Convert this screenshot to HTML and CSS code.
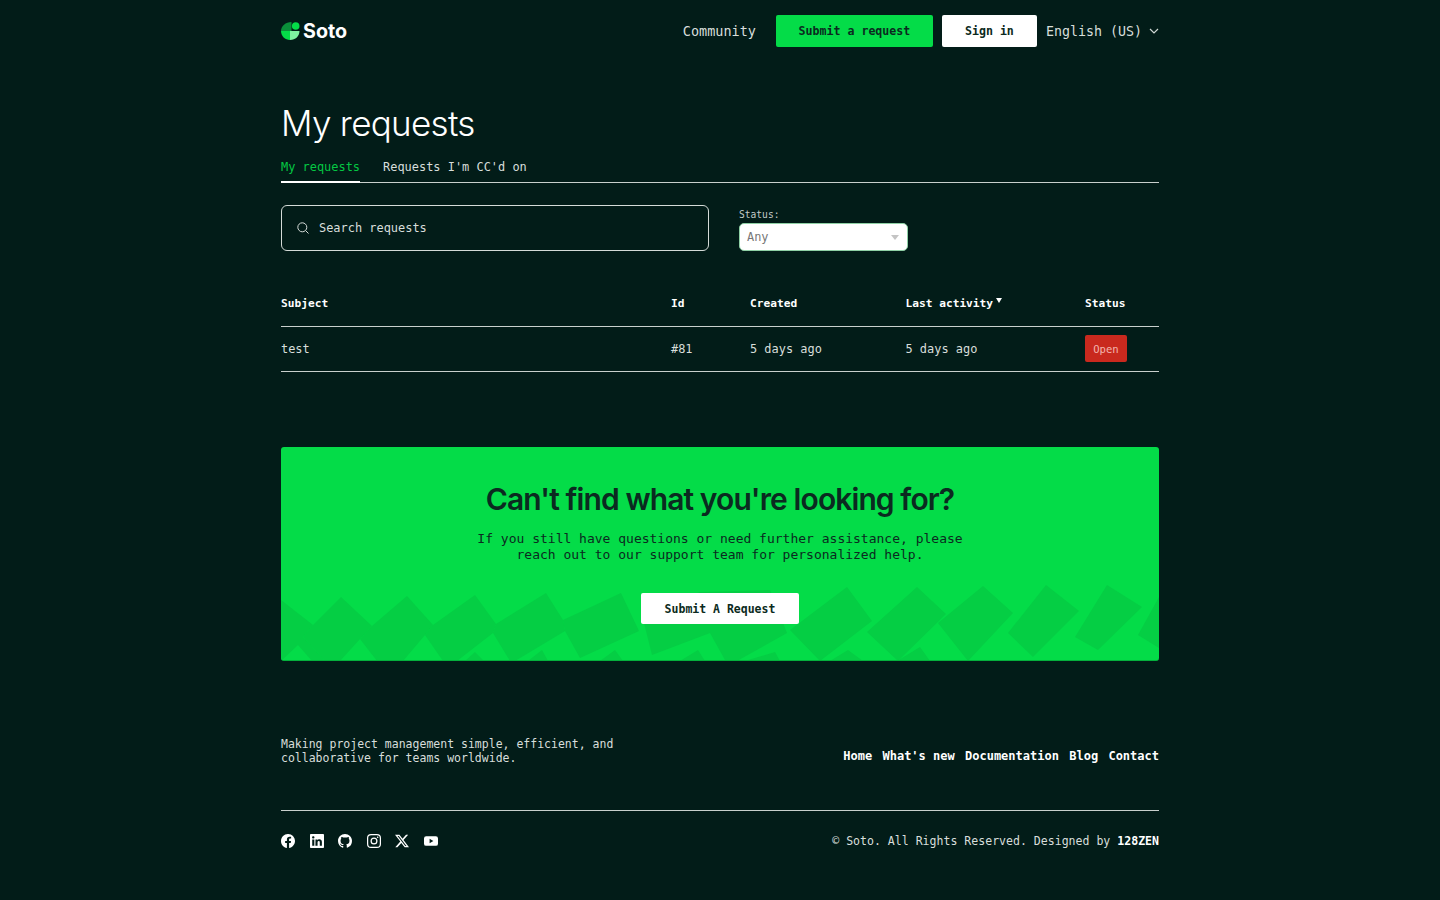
FILE: index.html
```html
<!DOCTYPE html>
<html lang="en">
<head>
    <meta charset="UTF-8">
    <meta name="viewport" content="width=device-width, initial-scale=1.0">
    <title>My requests - Soto</title>
    <link rel="stylesheet" href="styles.css">
</head>
<body>

<div class="container">
    <header class="header">
        <a class="logo" href="#">
            <svg class="logo-mark" width="19" height="18" viewBox="0 0 19 18">
                <path d="M0 9C0 4 4.500 0 10.500 0V9z" fill="#0a8f3a"/>
                <path d="M0 9h9v9C4 18 0 14 0 9z" fill="#04dc48"/>
                <path d="M9 9h9.500C18.500 14 14.500 18 9 18z" fill="#7df0a0"/>
                <circle cx="14.700" cy="4" r="3.800" fill="#04dc48"/>
            </svg>
            <span>Soto</span>
        </a>
        <nav class="nav">
            <a class="nav-link" href="#">Community</a>
            <a class="btn btn-green" href="#">Submit a request</a>
            <a class="btn btn-white" href="#">Sign in</a>
            <a class="lang" href="#">English (US)
                <svg width="10" height="6" viewBox="0 0 10 6"><path d="M1 1l4 4 4-4" fill="none" stroke="#cfd6d3" stroke-width="1.200"/></svg>
            </a>
        </nav>
    </header>

    <h1>My requests</h1>

    <!-- Tabs -->
    <div class="tabs">
        <a class="tab active" href="#">My requests</a>
        <a class="tab" href="#">Requests I'm CC'd on</a>
    </div>

    <!-- Search and filter -->
    <div class="filters">
        <div class="search">
            <svg width="12" height="12" viewBox="0 0 12 12"><circle cx="5.300" cy="5.300" r="4.500" fill="none" stroke="#d5dbd8" stroke-width="1"/><path d="M8.600 8.600L11.500 11.500" stroke="#d5dbd8" stroke-width="1"/></svg>
            <span>Search requests</span>
        </div>
        <div class="status-filter">
            <label>Status:</label>
            <div class="select">
                <span>Any</span>
                <i class="select-arrow"></i>
            </div>
        </div>
    </div>

    <!-- Result table -->
    <table class="request-table">
        <thead>
            <tr>
                <th class="col-subject">Subject</th>
                <th class="col-id">Id</th>
                <th class="col-created">Created</th>
                <th class="col-activity">Last activity<i class="sort-arrow"></i></th>
                <th>Status</th>
            </tr>
        </thead>
        <tbody>
            <tr>
                <td>test</td>
                <td>#81</td>
                <td>5 days ago</td>
                <td>5 days ago</td>
                <td><span class="badge">Open</span></td>
            </tr>
        </tbody>
    </table>

    <!-- Call to action -->
    <section class="cta">
        <svg class="cta-pattern" viewBox="281 447 878 214" width="878" height="214">
            <g fill="#05ce44">
                <polygon points="281,600 313,625 303,637 325,661 312,661 298,645 281,661"/>
                <polygon points="341,597 372,626 360,639 340,661 325,661 303,637 313,625"/>
                <polygon points="407,596 433,625 425,635 403,661 377,661 360,639 372,626"/>
                <polygon points="475,595 496,624 493,633 457,661 443,661 425,635 433,625"/>
                <polygon points="546,593 563,620 565,631 515,661 510,661 493,633 496,624"/>
                <polygon points="621,593 639,631 580,658 565,631 563,620"/>
                <polygon points="642,615 652,655 710,633 725,660 737,661 787,633 770,590 700,592"/>
                <polygon points="847,587 872,621 820,661 790,630"/>
                <polygon points="917,587 946,614 898,661 867,632"/>
                <polygon points="983,586 1013,613 968,661 938,623"/>
                <polygon points="1046,585 1079,611 1033,657 1008,633"/>
                <polygon points="1107,585 1142,607 1098,650 1075,637"/>
                <polygon points="1159,597 1138,635 1159,648"/>
                <polygon points="475,652 484,661 465,661"/>
                <polygon points="542,650 548,661 528,661"/>
                <polygon points="615,650 623,661 600,661"/>
                <polygon points="698,650 705,661 680,661"/>
                <polygon points="775,652 780,661 745,661"/>
                <polygon points="848,650 863,661 830,661"/>
                <polygon points="920,647 930,661 897,661"/>
            </g>
        </svg>
        <h2>Can't find what you're looking for?</h2>
        <p>If you still have questions or need further assistance, please<br>reach out to our support team for personalized help.</p>
        <a class="btn-cta" href="#">Submit A Request</a>
    </section>

    <footer class="footer">
        <div class="footer-top">
            <p>Making project management simple, efficient, and<br>collaborative for teams worldwide.</p>
            <nav class="footer-links">
                <a href="#">Home</a>
                <a href="#">What's new</a>
                <a href="#">Documentation</a>
                <a href="#">Blog</a>
                <a href="#">Contact</a>
            </nav>
        </div>
        <div class="footer-bottom">
            <div class="social">
                <svg width="14" height="14" viewBox="0 0 16 16"><path d="M16 8.049c0-4.446-3.582-8.050-8-8.050C3.580 0-.002 3.603-.002 8.050c0 4.017 2.926 7.347 6.750 7.951v-5.625h-2.030V8.050H6.750V6.275c0-2.017 1.195-3.131 3.022-3.131.876 0 1.791.157 1.791.157v1.980h-1.009c-.993 0-1.303.621-1.303 1.258v1.510h2.218l-.354 2.326H9.250V16c3.824-.604 6.750-3.934 6.750-7.951"/></svg>
                <svg width="14" height="14" viewBox="0 0 16 16"><path d="M0 1.146C0 .513.526 0 1.175 0h13.650C15.474 0 16 .513 16 1.146v13.708c0 .633-.526 1.146-1.175 1.146H1.175C.526 16 0 15.487 0 14.854zm4.943 12.248V6.169H2.542v7.225zm-1.200-8.212c.837 0 1.358-.554 1.358-1.248-.015-.709-.520-1.248-1.342-1.248S2.400 3.226 2.400 3.934c0 .694.521 1.248 1.327 1.248zm4.908 8.212V9.359c0-.216.016-.432.080-.586.173-.431.568-.878 1.232-.878.869 0 1.216.662 1.216 1.634v3.865h2.401V9.250c0-2.220-1.184-3.252-2.764-3.252-1.274 0-1.845.700-2.165 1.193v.025h-.016l.016-.025V6.169h-2.400c.030.678 0 7.225 0 7.225z"/></svg>
                <svg width="14" height="14" viewBox="0 0 16 16"><path d="M8 0C3.580 0 0 3.580 0 8c0 3.540 2.290 6.530 5.470 7.590.400.070.550-.170.550-.380 0-.190-.010-.820-.010-1.490-2.010.370-2.530-.490-2.690-.940-.090-.230-.480-.940-.820-1.130-.280-.150-.680-.520-.010-.530.630-.010 1.080.580 1.230.820.720 1.210 1.870.870 2.330.660.070-.520.280-.870.510-1.070-1.780-.200-3.640-.890-3.640-3.950 0-.870.310-1.590.820-2.150-.080-.200-.360-1.020.080-2.120 0 0 .670-.210 2.200.820.640-.180 1.320-.270 2-.270s1.360.090 2 .270c1.530-1.040 2.200-.820 2.200-.820.440 1.100.160 1.920.080 2.120.510.560.820 1.270.820 2.150 0 3.070-1.870 3.750-3.650 3.950.290.250.540.730.540 1.480 0 1.070-.010 1.930-.010 2.200 0 .210.150.460.550.380A8.010 8.010 0 0 0 16 8c0-4.420-3.580-8-8-8"/></svg>
                <svg width="14" height="14" viewBox="0 0 16 16"><rect x=".7" y=".7" width="14.600" height="14.600" rx="4" fill="none" stroke="#fff" stroke-width="1.400"/><circle cx="8" cy="8" r="3.300" fill="none" stroke="#fff" stroke-width="1.400"/><circle cx="12.200" cy="3.800" r=".9"/></svg>
                <svg width="14" height="14" viewBox="0 0 16 16"><path d="M12.600.750h2.454l-5.360 6.142L16 15.250h-4.937l-3.867-5.070-4.425 5.070H.316l5.733-6.570L0 .750h5.063l3.495 4.633L12.601.750Zm-.860 13.028h1.360L4.323 2.145H2.865z"/></svg>
                <svg width="14" height="14" viewBox="0 0 16 16"><path fill-rule="evenodd" d="M2.500 2.500h11A2.500 2.500 0 0 1 16 5v6a2.500 2.500 0 0 1-2.500 2.500h-11A2.500 2.500 0 0 1 0 11V5a2.500 2.500 0 0 1 2.500-2.500zM6.400 5.500v5L10.700 8z"/></svg>
            </div>
            <p class="copyright">© Soto. All Rights Reserved. Designed by <b>128ZEN</b></p>
        </div>
    </footer>
</div>

</body>
</html>
```

FILE: styles.css
```css
* {
    box-sizing: border-box;
    margin: 0;
    padding: 0;
}

body {
    font-family: 'DejaVu Sans Mono', 'Liberation Mono', monospace;
    background-color: #021c18;
    color: #d8dedb;
    font-size: 11.95px;
}

a {
    color: inherit;
    text-decoration: none;
}

.container {
    width: 878px;
    margin: 0 auto;
}

.header {
    height: 62px;
    display: flex;
    align-items: center;
    justify-content: space-between;
}

.logo {
    display: flex;
    align-items: center;
    gap: 3px;
    font-family: 'Inter', sans-serif;
    font-size: 19.7px;
    font-weight: 700;
    color: #fff;
}

.nav {
    display: flex;
    align-items: center;
}

.nav-link {
    font-size: 13.5px;
    margin-right: 20px;
}

.btn {
    display: flex;
    align-items: center;
    justify-content: center;
    height: 32px;
    border-radius: 2px;
    font-size: 11.6px;
    font-weight: 700;
    color: #0b2a20;
}

.btn-green {
    width: 157px;
    background-color: #04dc48;
    margin-right: 9px;
}

.btn-white {
    width: 95px;
    background-color: #fff;
    margin-right: 9px;
}

.lang {
    display: flex;
    align-items: center;
    gap: 7px;
    font-size: 13.3px;
}

h1 {
    margin-top: 38px;
    font-family: 'Inter', sans-serif;
    font-size: 35px;
    font-weight: 300;
    line-height: 46px;
    letter-spacing: -0.7px;
    color: #fff;
}

.tabs {
    display: flex;
    gap: 23px;
    border-bottom: 1px solid #c9d0cd;
}

.tab {
    padding: 13px 0 6px;
    line-height: 16px;
    margin-bottom: -1px;
    border-bottom: 2px solid transparent;
}

.tab.active {
    color: #04c843;
    border-bottom-color: #fff;
}

.filters {
    display: flex;
    align-items: flex-end;
    gap: 30px;
    margin-top: 22px;
}

.search {
    width: 428px;
    height: 46px;
    display: flex;
    align-items: center;
    gap: 10px;
    padding-left: 15px;
    border: 1px solid #d5dbd8;
    border-radius: 6px;
}

.status-filter label {
    display: block;
    font-size: 9.6px;
    line-height: 12px;
    margin-bottom: 2px;
    color: #c3cbc8;
}

.select {
    width: 169px;
    height: 28px;
    display: flex;
    align-items: center;
    justify-content: space-between;
    padding: 0 8px 0 7px;
    background-color: #fff;
    border: 1px solid #8fd0a5;
    border-radius: 5px;
    color: #777;
}

.select-arrow {
    width: 0;
    height: 0;
    border-left: 4px solid transparent;
    border-right: 4px solid transparent;
    border-top: 5px solid #c4c4c4;
}

.request-table {
    width: 100%;
    margin-top: 30px;
    border-collapse: separate;
    border-spacing: 0;
    table-layout: fixed;
}

.request-table th,
.request-table td {
    text-align: left;
    border-bottom: 1px solid #c9d0cd;
    vertical-align: middle;
}

.request-table th {
    height: 46px;
    font-size: 11.2px;
    color: #fff;
}

.request-table td {
    height: 45px;
}

.col-subject { width: 390px; }
.col-id { width: 79px; }
.col-created { width: 155.5px; }
.col-activity { width: 179.5px; }

.sort-arrow {
    display: inline-block;
    margin-left: 3px;
    vertical-align: 4px;
    border-left: 3px solid transparent;
    border-right: 3px solid transparent;
    border-top: 5px solid #fff;
}

.badge {
    display: flex;
    align-items: center;
    justify-content: center;
    width: 42px;
    height: 27px;
    margin-bottom: 1px;
    background-color: #c9291e;
    border-radius: 2px;
    color: #f3b5ae;
    font-size: 10.6px;
}

.cta {
    position: relative;
    height: 214px;
    margin-top: 75px;
    padding-top: 34px;
    background-color: #04dc48;
    border-bottom: 1px solid #04b03c;
    border-radius: 3px;
    overflow: hidden;
    text-align: center;
    color: #0b2a20;
}

.cta-pattern {
    position: absolute;
    left: 0;
    top: 0;
}

.cta h2,
.cta p,
.btn-cta {
    position: relative;
}

.cta h2 {
    font-family: 'Inter', sans-serif;
    font-size: 30px;
    font-weight: 600;
    line-height: 36px;
    letter-spacing: -0.9px;
}

.cta p {
    margin-top: 14px;
    font-size: 13px;
    line-height: 16px;
}

.btn-cta {
    display: flex;
    align-items: center;
    justify-content: center;
    width: 158px;
    height: 31px;
    margin: 30px auto 0;
    background-color: #fff;
    border-radius: 2px;
    font-size: 11.5px;
    font-weight: 700;
}

.footer {
    margin-top: 76px;
}

.footer-top {
    display: flex;
    justify-content: space-between;
    align-items: flex-end;
    padding-bottom: 45px;
    border-bottom: 1px solid #c9d0cd;
}

.footer-top p {
    font-size: 11.5px;
    line-height: 14px;
}

.footer-links {
    display: flex;
    gap: 10.3px;
    font-size: 12px;
    font-weight: 700;
    padding-bottom: 2px;
    color: #fff;
}

.footer-bottom {
    display: flex;
    justify-content: space-between;
    align-items: center;
    height: 60px;
}

.social {
    display: flex;
    gap: 14.5px;
}

.social svg {
    fill: #fff;
}

.copyright {
    font-size: 11.55px;
}

.copyright b {
    color: #fff;
}
```
